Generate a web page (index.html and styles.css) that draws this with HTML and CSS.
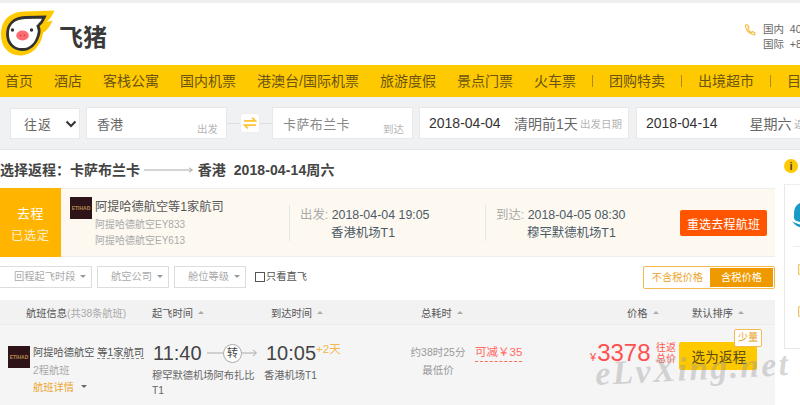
FILE: index.html
```html
<!DOCTYPE html>
<html lang="zh">
<head>
<meta charset="utf-8">
<title>飞猪</title>
<link rel="stylesheet" href="styles.css">
</head>
<body>
<div class="page">
  <header class="header">
    <div class="brand">
      <svg class="pig" width="56" height="58" viewBox="0 0 56 58">
        <path d="M1 35C1 20 10 12 24 11.500L54.500 10.500C52.500 15.500 50 19 46.500 22L52.500 20.500C50 27 46.500 30.500 43 33C41 46 32 55.500 20 55.500C9 55.500 1 47 1 35Z" fill="#ffc900"/>
        <path d="M7.500 34C7.500 24 14 18 25 17.500L44.500 17C43 20.500 41 23.500 38 26C39.500 29 39.500 32 38.500 35C36 44 30 49.500 22 49.500C13.500 49.500 7.500 43 7.500 34Z" fill="#fff" stroke="#333" stroke-width="2.800"/>
        <circle cx="12.500" cy="30" r="1.700" fill="#333"/>
        <circle cx="31.500" cy="30" r="1.700" fill="#333"/>
        <ellipse cx="22.500" cy="35.500" rx="6.300" ry="5" fill="#fb6b72"/>
        <circle cx="20.500" cy="35.500" r=".8" fill="#c23a45"/>
        <circle cx="24.500" cy="35.500" r=".8" fill="#c23a45"/>
      </svg>
      <span class="brand-name">飞猪</span>
    </div>
    <div class="phone">
      <svg class="phone-icon" width="12" height="12" viewBox="0 0 12 12">
        <path d="M1.500 1C1 5 4.500 10 10.500 11L11 9L8.500 7.500L7.500 8.500C6 8 4.500 6 4 4.500L5 3.500L3.500 .8Z" fill="none" stroke="#f5c04a" stroke-width="1.200"/>
      </svg>
      <div class="phone-lines">
        <div>国内&nbsp; 400-661-8888</div>
        <div>国际&nbsp; +86-571-8888</div>
      </div>
    </div>
  </header>

  <nav class="nav">
    <a>首页</a><a>酒店</a><a>客栈公寓</a><a>国内机票</a><a>港澳台/国际机票</a><a>旅游度假</a><a>景点门票</a><a>火车票</a>
    <i class="nav-sep"></i><a>团购特卖</a><i class="nav-sep"></i><a>出境超市</a><i class="nav-sep"></i><a>目的地</a>
  </nav>

  <section class="search">
    <div class="box trip">往返
      <svg width="12" height="8" viewBox="0 0 12 8"><path d="M1.500 1.500L6 6L10.500 1.500" fill="none" stroke="#333" stroke-width="2"/></svg>
    </div>
    <div class="box city from"><span>香港</span><small>出发</small></div>
    <div class="swap-wrap">
      <div class="swap">
        <svg width="14" height="14" viewBox="0 0 13 13"><path d="M1 4.500H11.500L8.500 1.500M12 8.500H1.500L4.500 11.500" fill="none" stroke="#ffc233" stroke-width="1.700"/></svg>
      </div>
    </div>
    <div class="box city to"><span class="muted">卡萨布兰卡</span><small>到达</small></div>
    <div class="box date"><b>2018-04-04</b><em>清明前1天</em><small>出发日期</small></div>
    <div class="box date last"><b>2018-04-14</b><em>星期六</em><small>返程</small></div>
  </section>

  <main class="content">
    <div class="left">
      <h1 class="title">选择返程：卡萨布兰卡
        <svg width="50" height="6" viewBox="0 0 50 6"><path d="M0 3H48M45 .8L48.500 3L45 5.200" fill="none" stroke="#aaa"/></svg>
        香港 <span class="title-date">2018-04-14周六</span></h1>

      <section class="chosen">
        <div class="tag"><strong>去程</strong><span>已选定</span></div>
        <div class="airline">
          <div class="al-logo"><span>ETIHAD</span></div>
          <div class="al-text">
            <div class="al-name">阿提哈德航空等1家航司</div>
            <div class="al-sub">阿提哈德航空EY833</div>
            <div class="al-sub">阿提哈德航空EY613</div>
          </div>
        </div>
        <div class="leg dep">
          <div><span class="leg-label">出发:</span> 2018-04-04 19:05</div>
          <div class="leg-port">香港机场T1</div>
        </div>
        <div class="leg arr">
          <div><span class="leg-label">到达:</span> 2018-04-05 08:30</div>
          <div class="leg-port">穆罕默德机场T1</div>
        </div>
        <button class="reselect">重选去程航班</button>
      </section>

      <section class="filters">
        <div class="drop d1">回程起飞时段<i class="caret"></i></div>
        <div class="drop d2">航空公司<i class="caret"></i></div>
        <div class="drop d3">舱位等级<i class="caret"></i></div>
        <label class="direct"><i class="check"></i>只看直飞</label>
        <div class="toggle"><span class="off">不含税价格</span><span class="on">含税价格</span></div>
      </section>

      <section class="thead">
        <div class="h1">航班信息<span>(共38条航班)</span></div>
        <div class="h2">起飞时间<i class="up"></i></div>
        <div class="h3">到达时间<i class="up"></i></div>
        <div class="h4">总耗时<i class="up"></i></div>
        <div class="h5">价格<i class="up"></i></div>
        <div class="h6">默认排序<i class="up"></i></div>
      </section>

      <section class="row">
        <div class="al-logo small"><span>ETIHAD</span></div>
        <div class="r-air">
          <div class="r-name">阿提哈德航空 <u>等1家航司</u></div>
          <div class="r-sub">2程航班</div>
          <div class="r-link">航班详情<i class="caret dark"></i></div>
        </div>
        <div class="r-dep">
          <div class="time">11:40</div>
          <div class="port">穆罕默德机场阿布扎比T1</div>
        </div>
        <div class="conn">
          <span class="conn-circle">转</span>
          <svg class="conn-arrow" width="52" height="8" viewBox="0 0 52 8"><path d="M0 4H49M46 1L49.500 4L46 7" fill="none" stroke="#aaa"/></svg>
        </div>
        <div class="r-arr">
          <div class="time">10:05<sup>+2天</sup></div>
          <div class="port">香港机场T1</div>
        </div>
        <div class="r-dur">
          <div>约38时25分</div>
          <div class="r-low">最低价</div>
        </div>
        <div class="r-cut"><span>可减￥35</span></div>
        <div class="r-price"><span class="yen">¥</span><span class="num">3378</span></div>
        <div class="r-note">往返<br>总价</div>
        <button class="choose">选为返程<span class="few">少量</span></button>
      </section>
    </div>

    <aside class="side">
      <div class="info">i</div>
      <div class="side-box">
        <svg class="shield" width="18" height="28" viewBox="0 0 18 28"><path d="M8 1C4 3 2 6 2 12V16C2 18 4 19 8 20L18 21V1Z" fill="#1a9bc7"/><path d="M0 19C3 24 7 26 18 27V24C9 23 4 22 0 19Z" fill="#1a9bc7"/></svg>
        <div class="side-rule"></div>
        <i class="side-tag t1"></i>
        <i class="side-tag t2"></i>
      </div>
    </aside>
  </main>

  <div class="watermark">eLvXing.net</div>
</div>
</body>
</html>
```
FILE: styles.css
```css
* { box-sizing: border-box; }
html, body { margin: 0; padding: 0; }
body { font-family: "Liberation Sans", "Noto Sans CJK SC", sans-serif; color: #555; background: #fff; }
.page { position: relative; width: 800px; height: 405px; overflow: hidden; background: #f0f1f3; }

.header { height: 65px; border-top: 3px solid #eeeeee; background: #fff; display: flex; justify-content: space-between; }
.brand { display: flex; align-items: flex-start; }
.pig { margin-top: -3px; flex: none; }
.brand-name { font-size: 24px; line-height: 30px; font-weight: 700; color: #3a3a3a; margin: 20px 0 0 3px; }
.phone { display: flex; width: 56px; padding-top: 19px; flex: none; overflow: hidden; }
.phone-icon { flex: none; margin: 2px 7px 0 0; }
.phone-lines { font-size: 10.500px; line-height: 15px; color: #666; white-space: nowrap; }

.nav { height: 32px; background: #ffc900; display: flex; align-items: center; padding-left: 5px; gap: 21px; white-space: nowrap; }
.nav a { font-size: 14px; line-height: 32px; color: #6a5410; }
.nav-sep { width: 1px; height: 12px; background: #a88a20; margin: 0 -5px; flex: none; }

.search { height: 53px; padding: 10px 0 0 10px; display: flex; align-items: flex-start; background: #f0f1f3; border-bottom: 1px solid #e6e6e6; }
.box { height: 32px; background: #fff; border: 1px solid #e8e8e8; display: flex; align-items: center; flex: none; white-space: nowrap; }
.trip { width: 70px; height: 31px; margin: 1px 6px 0 0; padding: 0 0 0 13px; font-size: 13px; letter-spacing: 1px; color: #666; gap: 13px; }
.city { position: relative; padding-left: 10px; font-size: 13px; color: #666; }
.city small { position: absolute; right: 8px; top: 13px; font-size: 10.500px; color: #b5b5b5; }
.from { width: 141px; }
.to { width: 141px; margin-right: 6px; }
.muted { color: #888; letter-spacing: .4px; }
.swap-wrap { width: 45px; height: 32px; flex: none; display: flex; align-items: center; justify-content: center; background: linear-gradient(#ddd, #ddd) center / 100% 1px no-repeat; }
.swap { width: 20px; height: 20px; background: #fff; border: 1px solid #eee; border-radius: 3px; display: flex; align-items: center; justify-content: center; }
.date { width: 210px; padding-left: 9px; margin-right: 7px; font-size: 14px; color: #444; }
.date b { font-weight: 400; color: #333; width: 85px; }
.date em { font-style: normal; color: #666; width: 66px; font-size: 14px; }
.date small { font-size: 10.500px; color: #b5b5b5; }
.date.last { width: 180px; margin-right: 0; }
.date.last b { width: 107px; }
.date.last em { width: 46px; }

.content { display: flex; height: 255px; background: #fff; }
.left { width: 775px; flex: none; }
.title { margin: 0; height: 38px; padding-top: 11px; font-size: 14px; line-height: 18px; font-weight: 700; color: #444; white-space: nowrap; }
.title svg { margin: 0 0 2px 0; vertical-align: middle; }
.title-date { margin-left: 4px; letter-spacing: .1px; }

.chosen { height: 69px; background: #fdf9f1; border-top: 1px solid #eee; border-bottom: 1px solid #eee; display: flex; }
.tag { width: 61px; flex: none; margin: -1px 0; background: #ffb400; color: #fff; display: flex; flex-direction: column; align-items: center; padding-top: 17px; }
.tag strong { font-size: 13px; line-height: 18px; font-weight: 400; letter-spacing: .5px; }
.tag span { font-size: 12px; line-height: 18px; margin-top: 4px; opacity: .8; letter-spacing: 1px; }
.airline { display: flex; width: 228px; flex: none; padding: 8px 0 0 9px; }
.al-logo { width: 22px; height: 22px; background: #2e1419; flex: none; display: flex; align-items: center; justify-content: center; overflow: hidden; }
.al-logo span { font-size: 5px; line-height: 5px; color: #b88a4a; font-weight: 700; }
.al-text { margin-left: 3px; }
.al-name { font-size: 12.200px; line-height: 18px; color: #555; margin-top: 1px; white-space: nowrap; }
.al-sub { font-size: 10px; line-height: 16px; color: #aaa; white-space: nowrap; }
.al-name + .al-sub { margin-top: 1px; }
.leg { margin-top: 16px; height: 36px; border-left: 1px solid #e5e5e5; padding-left: 10px; font-size: 12.400px; line-height: 18px; color: #4c5a66; white-space: nowrap; padding-top: 1px; }
.dep { width: 196px; }
.arr { width: 195px; }
.leg-label { color: #aaa; }
.leg-port { padding-left: 31px; }
.reselect { margin-top: 21px; width: 87px; height: 26px; border: 0; border-radius: 2px; background: #ff5500; color: #fff; font-family: inherit; font-size: 12px; letter-spacing: .2px; padding: 0; flex: none; }

.filters { height: 43px; padding-top: 9px; display: flex; align-items: flex-start; white-space: nowrap; }
.drop { height: 22px; border: 1px solid #ddd; font-size: 10.250px; line-height: 20px; color: #aaa; margin-right: 5px; position: relative; padding-left: 13px; }
.d1 { width: 92px; border-left: 0; padding-left: 14px; }
.d2, .d3 { width: 72px; }
.d3 { margin-right: 9px; }
.caret { position: absolute; right: 5px; top: 8px; width: 0; height: 0; border-left: 3.500px solid transparent; border-right: 3.500px solid transparent; border-top: 3.500px solid #999; }
.direct { display: flex; align-items: center; font-size: 10.250px; line-height: 22px; color: #555; }
.check { width: 10px; height: 10px; border: 1px solid #555; flex: none; margin-right: 1px; }
.toggle { margin-left: auto; width: 132px; height: 23px; border: 1px solid #f2b94f; border-radius: 2px; display: flex; font-size: 10.250px; padding: 1px; }
.off { width: 65px; text-align: center; color: #eea52c; line-height: 19px; }
.on { flex: 1; background: #ee9900; color: #fff; text-align: center; line-height: 19px; }

.thead { height: 25px; background: #f2f2f3; border-bottom: 1px solid #ededed; display: flex; align-items: center; font-size: 10.250px; color: #555; white-space: nowrap; }
.thead div { flex: none; display: flex; align-items: center; gap: 5px; }
.thead span { color: #aaa; margin-left: -5px; }
.h1 { width: 152px; padding-left: 26px; }
.h2 { width: 119px; }
.h3 { width: 150px; }
.h4 { width: 206px; }
.h5 { width: 65px; }
.up { width: 0; height: 0; border-left: 3.500px solid transparent; border-right: 3.500px solid transparent; border-bottom: 3.500px solid #aaa; }

.row { position: relative; height: 80px; background: #f5f5f6; display: flex; padding: 21px 0 0 8px; white-space: nowrap; }
.r-air { width: 119px; margin-left: 3px; flex: none; font-size: 10.250px; color: #555; margin-top: -1px; }
.r-name { line-height: 16px; }
.r-name u { text-decoration: underline dashed #888; text-underline-offset: 2px; }
.r-sub { color: #aaa; line-height: 17px; margin-top: 1px; }
.r-link { position: relative; color: #eea52c; line-height: 17px; width: 60px; }
.caret.dark { right: 6px; top: 6px; border-top-color: #666; }
.r-dep { width: 55px; flex: none; padding-left: 1px; }
.time { font-size: 20px; line-height: 24px; color: #444; margin-top: -5px; }
.time sup { font-size: 11.500px; line-height: 1; color: #f3b64a; vertical-align: 7px; }
.port { font-size: 10.250px; line-height: 15px; color: #666; margin-top: 3px; margin-left: -1px; width: 103px; white-space: normal; }
.conn { position: relative; width: 58px; flex: none; margin-top: -2px; height: 20px; }
.conn-arrow { position: absolute; left: 0; top: 5px; }
.conn-circle { position: absolute; left: 16px; top: 0; width: 19px; height: 19px; border-radius: 50%; background: #fff; border: 1px solid #aaa; font-size: 11px; line-height: 17px; text-align: center; color: #444; z-index: 1; }
.r-arr { width: 141px; flex: none; }
.r-arr .time { margin-left: 1px; }
.r-dur { width: 64px; flex: none; font-size: 10.500px; line-height: 18px; color: #999; text-align: center; margin-top: -3px; }
.r-low { color: #999; }
.r-cut { width: 120px; padding-left: 5px; flex: none; font-size: 11.500px; line-height: 16px; color: #ff6a5e; margin-top: -2px; }
.r-cut span { display: inline-block; border-bottom: 1px dashed #ff6a5e; padding-bottom: 1px; }
.r-price { flex: none; width: 66px; margin-top: -6px; color: #ff4f4f; white-space: nowrap; }
.yen { font-size: 11px; margin-right: 1px; }
.num { font-size: 24px; line-height: 26px; }
.r-note { flex: none; width: 23px; font-size: 10px; line-height: 10.500px; color: #ff5a50; margin-top: -3px; }
.choose { position: relative; width: 78px; height: 28px; margin-top: -4px; border: 0; border-radius: 2px; background: #ffc900; color: #5a4a14; font-family: inherit; font-size: 13.500px; letter-spacing: .3px; padding: 0 0 0 2px; flex: none; }
.few { position: absolute; right: -5px; top: -13px; width: 28px; height: 18px; background: #fff; border: 1px solid #f2b94f; border-radius: 2px; color: #e9a020; font-size: 10.250px; line-height: 16px; letter-spacing: 0; }

.side { flex: 1; padding: 9px 0 0 9px; }
.info { width: 14px; height: 14px; border-radius: 50%; background: #ffc900; color: #444; font-size: 11px; font-weight: 700; line-height: 14px; text-align: center; }
.side-box { position: relative; height: 165px; margin-top: 11px; border: 1px solid #e8e8e8; border-right: 0; border-top: 1px solid #eee; }
.shield { position: absolute; left: 7px; top: 17px; }
.side-rule { position: absolute; left: 8px; right: 0; top: 61px; height: 1px; background: #eee; }
.side-tag { position: absolute; left: 13px; width: 6px; height: 11px; border: 1px solid #f2c060; border-radius: 1px; background: #fdf3dd; }
.t1 { top: 79px; }
.t2 { top: 121px; }

.watermark { position: absolute; left: 595px; top: 345px; font-family: "Liberation Serif", serif; font-style: italic; font-weight: 700; font-size: 34px; line-height: 48px; letter-spacing: 2.200px; color: rgba(150, 150, 150, .38); transform: rotate(-3deg); white-space: nowrap; }
```
